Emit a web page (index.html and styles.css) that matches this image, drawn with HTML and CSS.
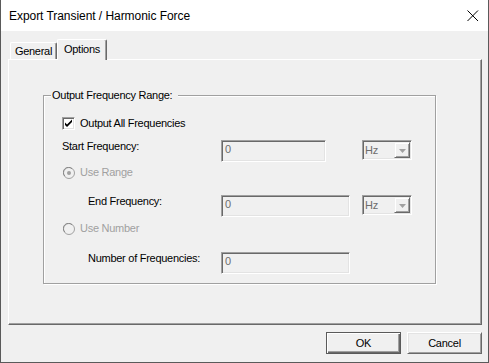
FILE: index.html
```html
<!DOCTYPE html>
<html>
<head>
<meta charset="utf-8">
<link rel="stylesheet" href="styles.css">
</head>
<body>
<div class="window">
  <div class="titlebar">
    <span class="title">Export Transient / Harmonic Force</span>
    <svg class="close" width="12" height="12" viewBox="0 0 12 12"><path d="M0.5 0.5 L11 11 M11 0.5 L0.5 11" stroke="#000" stroke-width="1" fill="none"/></svg>
  </div>
  <div class="content">
    <div class="tabs">
      <div class="tab">General</div>
      <div class="tab active">Options</div>
    </div>
    <div class="panel">
      <div class="group">
        <span class="legend">Output Frequency Range:</span>
        <div class="row row-check">
          <span class="checkbox"><svg width="9" height="9" viewBox="0 0 9 9"><path d="M1 3.5 L3 5.5 L8 0.5 L8 3 L3 8 L1 6 Z" fill="#000"/></svg></span>
          <span class="opt-label">Output All Frequencies</span>
        </div>
        <div class="row row-field first">
          <span class="field-label wide">Start Frequency:</span>
          <span class="textbox short">0</span>
          <span class="combo gap-wide"><span class="combo-text">Hz</span><span class="combo-btn"><svg width="7" height="4" viewBox="0 0 7 4"><path d="M0 0 H7 L3.5 4 Z" fill="#a0a0a0"/></svg></span></span>
        </div>
        <div class="row row-radio r1">
          <span class="radio checked"><svg width="12" height="12" viewBox="0 0 12 12"><circle cx="6" cy="6" r="5.5" fill="#f0f0f0" stroke="#a0a0a0"/><path d="M1.8 9 A5 5 0 0 1 9 1.8" stroke="#8a8a8a" fill="none"/><circle cx="6" cy="6" r="2" fill="#a0a0a0"/></svg></span>
          <span class="opt-label disabled">Use Range</span>
        </div>
        <div class="row row-field second">
          <span class="field-label indent">End Frequency:</span>
          <span class="textbox long">0</span>
          <span class="combo gap-narrow"><span class="combo-text">Hz</span><span class="combo-btn"><svg width="7" height="4" viewBox="0 0 7 4"><path d="M0 0 H7 L3.5 4 Z" fill="#a0a0a0"/></svg></span></span>
        </div>
        <div class="row row-radio r2">
          <span class="radio"><svg width="12" height="12" viewBox="0 0 12 12"><circle cx="6" cy="6" r="5.5" fill="#f0f0f0" stroke="#a0a0a0"/><path d="M1.8 9 A5 5 0 0 1 9 1.8" stroke="#8a8a8a" fill="none"/></svg></span>
          <span class="opt-label disabled">Use Number</span>
        </div>
        <div class="row row-field third">
          <span class="field-label indent">Number of Frequencies:</span>
          <span class="textbox long">0</span>
        </div>
      </div>
    </div>
    <div class="buttons">
      <button class="btn default">OK</button>
      <button class="btn">Cancel</button>
    </div>
  </div>
</div>
</body>
</html>
```
FILE: styles.css
```css
html, body {
  margin: 0;
  padding: 0;
  background: #f0f0f0;
}
body {
  font-family: "Liberation Sans", Arial, sans-serif;
  font-size: 11px;
  letter-spacing: -0.27px;
  color: #000;
}
.window {
  width: 489px;
  height: 363px;
  box-sizing: border-box;
  border-left: 1px solid #5a5a5a;
  border-right: 1px solid #5a5a5a;
  border-bottom: 1px solid #5a5a5a;
  display: flex;
  flex-direction: column;
  background: #f0f0f0;
}
.titlebar {
  height: 31px;
  flex: none;
  background: #fff;
  display: flex;
  align-items: center;
  justify-content: space-between;
  padding: 0 9px 0 8px;
}
.title {
  font-family: "Liberation Sans", Arial, sans-serif;
  font-size: 12px;
  letter-spacing: -0.05px;
  color: #000;
}
.close {
  display: block;
}
.content {
  flex: 1;
  display: flex;
  flex-direction: column;
  padding: 8px 6px 8px 7px;
}
.tabs {
  height: 20px;
  display: flex;
  align-items: flex-end;
  padding-left: 2px;
  position: relative;
  z-index: 1;
}
.tab {
  box-sizing: border-box;
  width: 47px;
  height: 17px;
  border-left: 1px solid #fff;
  border-top: 1px solid #fff;
  border-right: 1px solid #696969;
  box-shadow: inset -1px 0 #a0a0a0;
  border-radius: 2px 2px 0 0;
  display: flex;
  align-items: center;
  justify-content: center;
  background: #f0f0f0;
}
.tab.active {
  width: 50px;
  height: 21px;
  margin-bottom: -1px;
  padding-bottom: 3px;
}
.panel {
  box-sizing: border-box;
  height: 266px;
  border-top: 1px solid #fff;
  border-left: 1px solid #fff;
  border-right: 1px solid #696969;
  border-bottom: 1px solid #696969;
  box-shadow: inset -1px -1px #a0a0a0;
  display: flex;
  flex-direction: column;
}
.group {
  position: relative;
  box-sizing: border-box;
  margin: 35px 0 0 34px;
  width: 393px;
  height: 189px;
  border: 1px solid #a0a0a0;
  box-shadow: inset 1px 1px #fff, 1px 1px #fff;
  display: flex;
  flex-direction: column;
}
.legend {
  position: absolute;
  top: -7px;
  left: 7px;
  padding: 0 6px 0 1px;
  line-height: 13px;
  background: #f0f0f0;
}
.row {
  display: flex;
  flex: none;
}
.row-check {
  margin-top: 21px;
  height: 13px;
  padding-left: 18px;
  align-items: center;
}
.checkbox {
  box-sizing: border-box;
  width: 13px;
  height: 13px;
  border-top: 1px solid #a0a0a0;
  border-left: 1px solid #a0a0a0;
  border-right: 1px solid #fff;
  border-bottom: 1px solid #fff;
  box-shadow: inset 1px 1px #696969, inset -1px -1px #e3e3e3;
  background: #fff;
  display: flex;
  align-items: center;
  justify-content: center;
}
.checkbox svg {
  display: block;
}
.opt-label {
  margin-left: 5px;
  line-height: 13px;
}
.opt-label.disabled {
  color: #a0a0a0;
}
.row-field {
  height: 22px;
  align-items: flex-start;
}
.row-field.first { margin-top: 10px; }
.row-field.second { margin-top: 16px; }
.row-field.third { margin-top: 17px; }
.field-label {
  line-height: 13px;
  box-sizing: border-box;
}
.field-label.wide {
  width: 177px;
  padding-left: 18px;
}
.field-label.indent {
  width: 177px;
  padding-left: 44px;
}
.textbox {
  box-sizing: border-box;
  height: 22px;
  border-top: 1px solid #a0a0a0;
  border-left: 1px solid #a0a0a0;
  border-right: 1px solid #fff;
  border-bottom: 1px solid #fff;
  box-shadow: inset 1px 1px #696969, inset -1px -1px #e3e3e3;
  padding: 2px 0 0 3px;
  line-height: 13px;
  color: #6d6d6d;
}
.textbox.short { width: 105px; }
.textbox.long { width: 129px; }
.combo {
  box-sizing: border-box;
  width: 50px;
  height: 20px;
  border-top: 1px solid #a0a0a0;
  border-left: 1px solid #a0a0a0;
  border-right: 1px solid #fff;
  border-bottom: 1px solid #fff;
  box-shadow: inset 1px 1px #696969, inset -1px -1px #e3e3e3;
  padding: 1px;
  display: flex;
  justify-content: space-between;
}
.combo.gap-wide { margin-left: 36px; }
.combo.gap-narrow { margin-left: 12px; }
.combo-text {
  padding: 2px 0 0 1px;
  line-height: 13px;
  color: #6d6d6d;
}
.combo-btn {
  box-sizing: border-box;
  width: 16px;
  height: 16px;
  border-top: 1px solid #f0f0f0;
  border-left: 1px solid #f0f0f0;
  border-right: 1px solid #696969;
  border-bottom: 1px solid #696969;
  box-shadow: inset 1px 1px #fff, inset -1px -1px #a0a0a0;
  background: #f0f0f0;
  display: flex;
  align-items: center;
  justify-content: center;
  padding-top: 1px;
}
.combo-btn svg { display: block; }
.row-radio {
  height: 13px;
  padding-left: 19px;
  align-items: center;
}
.row-radio.r1 { margin-top: 4px; }
.row-radio.r2 { margin-top: 5px; }
.radio svg { display: block; }
.buttons {
  margin-top: 7px;
  height: 22px;
  display: flex;
  justify-content: flex-end;
  gap: 6px;
}
.btn {
  box-sizing: border-box;
  width: 75px;
  height: 22px;
  margin: 0;
  padding: 0;
  font-family: "Liberation Sans", Arial, sans-serif;
  font-size: 11px;
  letter-spacing: -0.27px;
  color: #000;
  background: #f0f0f0;
  border-top: 1px solid #fff;
  border-left: 1px solid #fff;
  border-right: 1px solid #696969;
  border-bottom: 1px solid #696969;
  box-shadow: inset 1px 1px #e3e3e3, inset -1px -1px #a0a0a0;
}
.btn.default {
  border: 1px solid #5a5a5a;
  box-shadow: inset 1px 1px #fff, inset -1px -1px #696969, inset -2px -2px #a0a0a0;
}
```
